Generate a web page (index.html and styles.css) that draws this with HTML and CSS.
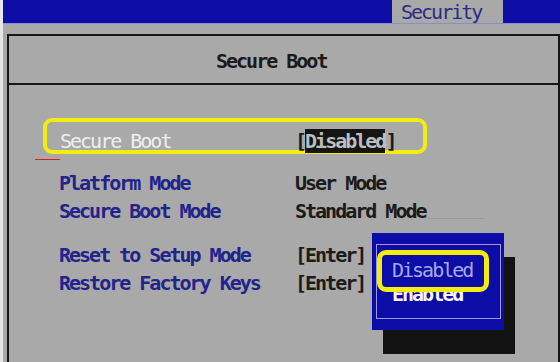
FILE: index.html
```html
<!DOCTYPE html>
<html lang="en">
<head>
  <meta charset="UTF-8" />
  <title>Security - Secure Boot</title>
  <meta name="viewport" content="width=device-width, initial-scale=1.0" />
  <link rel="stylesheet" href="styles.css">
</head>
<body>
  <div class="topbar">
    <div class="tab">Security</div>
  </div>

  <div class="panel">
    <div class="panel-head">Secure Boot</div>

    <div class="items">
      <div class="row row-selected">
        <span class="label">Secure Boot</span>
        <span class="value">[<span class="cursor">Disabled</span>]</span>
      </div>

      <div class="group">
        <div class="row">
          <span class="label link">Platform Mode</span>
          <span class="value">User Mode</span>
        </div>
        <div class="row">
          <span class="label link">Secure Boot Mode</span>
          <span class="value">Standard Mode<span class="trail"></span></span>
        </div>
      </div>

      <div class="group">
        <div class="row">
          <span class="label link">Reset to Setup Mode</span>
          <span class="value">[Enter]</span>
        </div>
        <div class="row">
          <span class="label link">Restore Factory Keys</span>
          <span class="value">[Enter]</span>
        </div>
      </div>
    </div>
  </div>

  <!-- option popup -->
  <div class="popup">
    <div class="popup-inner">
      <div class="opt opt-enabled">Enabled</div>
    </div>
    <div class="opt opt-active">Disabled</div>
  </div>
</body>
</html>
```

FILE: styles.css
```css
html, body {
  margin: 0;
  padding: 0;
  box-sizing: border-box;
}

*, *::before, *::after {
  box-sizing: inherit;
}

body {
  width: 560px;
  height: 362px;
  overflow: hidden;
  position: relative;
  background: #a9a9a9;
  border-left: 3px solid #e6e6e6;
  font-family: 'DejaVu Sans Mono', monospace;
  font-size: 20px;
  letter-spacing: -2px;
  color: #1b1b1b;
}

.topbar {
  display: flex;
  height: 24px;
  background: #0d0da6;
  border-bottom: 1px solid #8b8bd0;
}

.tab {
  margin-left: 389px;
  width: 111px;
  padding-left: 9px;
  background: #a9a9a9;
  color: #2b2b86;
  line-height: 24px;
}

.panel {
  margin: 10px 0 0 4px;
  height: 340px;
  border: 2px solid #161616;
  border-bottom: none;
}

.panel-head {
  height: 49px;
  line-height: 50px;
  padding-left: 207px;
  border-bottom: 2px solid #161616;
  font-weight: bold;
}

.items {
  padding-top: 33px;
}

.row {
  display: grid;
  grid-template-columns: 236px auto;
  height: 28px;
  line-height: 28px;
  padding-left: 50px;
  white-space: nowrap;
}

.row-selected {
  position: relative;
  width: 384px;
  height: 36px;
  margin-left: 34px;
  padding: 7px 0 0 13px;
  line-height: 24px;
  border: 4px solid #f2ec10;
  border-radius: 9px;
  grid-template-columns: 235px auto;
}

.row-selected .label {
  color: #efefef;
}

.row-selected::after {
  content: "";
  position: absolute;
  left: -12px;
  bottom: -10px;
  width: 25px;
  height: 1px;
  background: #d81e1e;
}

.value {
  font-weight: bold;
}

.cursor {
  background: #151515;
  color: #bdbdbd;
}

.group {
  margin-top: 15px;
}

.group + .group {
  margin-top: 16px;
}

.link {
  color: #23238c;
  font-weight: bold;
}

.trail {
  display: inline-block;
  width: 56px;
  height: 7px;
  margin-left: 2px;
  vertical-align: -1px;
  border-bottom: 1px solid #989898;
}

.popup {
  position: absolute;
  left: 369px;
  top: 233px;
  width: 132px;
  height: 97px;
  background: #0c0ca6;
  box-shadow: 11px 24px 0 0 #121212;
}

.popup-inner {
  position: absolute;
  left: 4px;
  top: 11px;
  right: 3px;
  bottom: 11px;
  border: 1px solid #9a9ade;
  border-top-color: #c48ad0;
}

.opt {
  position: absolute;
  line-height: 24px;
}

.opt-enabled {
  left: 15px;
  top: 37px;
  color: #f4f4f4;
  font-weight: bold;
}

.opt-active {
  left: 5px;
  top: 17px;
  width: 112px;
  height: 42px;
  padding-left: 10px;
  line-height: 31px;
  background: #0c0ca6;
  color: #a9a9e6;
  border: 5px solid #f2ec10;
  border-radius: 9px;
}
```
